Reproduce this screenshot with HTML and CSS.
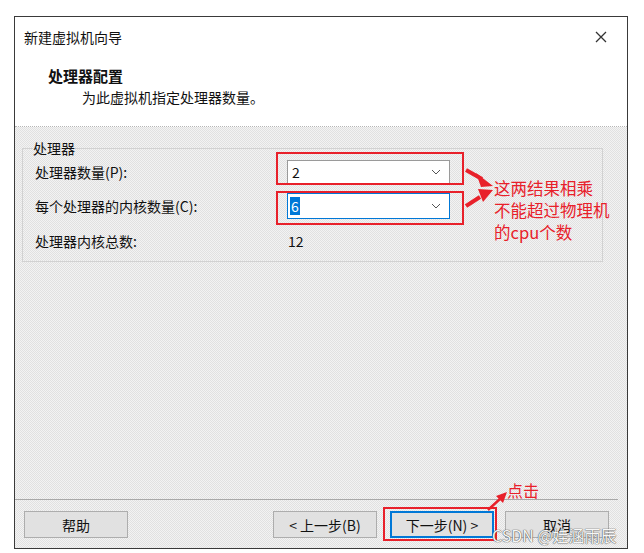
FILE: index.html
```html
<!DOCTYPE html>
<html>

	<head>
		<meta charset="UTF-8">
		<title>新建虚拟机向导</title>
		<link rel="stylesheet" href="styles.css">
	</head>

	<body>
		<div class="window">
			<!-- 顶部白色区域 -->
			<div class="header">
				<div class="titleBar">
					<span class="title">新建虚拟机向导</span>
					<svg class="close" width="12" height="12" viewBox="0 0 12 12">
						<path d="M1 1L11 11M11 1L1 11" stroke="#333" stroke-width="1.3" fill="none" />
					</svg>
				</div>
				<h3>处理器配置</h3>
				<p class="sub">为此虚拟机指定处理器数量。</p>
			</div>

			<!-- 灰色内容区域 -->
			<div class="body">
				<fieldset class="group">
					<legend>处理器</legend>
					<div class="rows">
						<label>处理器数量(P):</label>
						<div class="combo">
							<span class="val">2</span>
							<svg width="10" height="6" viewBox="0 0 10 6"><path d="M1 1L5 5L9 1" stroke="#555" fill="none" /></svg>
						</div>
						<label>每个处理器的内核数量(C):</label>
						<div class="combo focus">
							<span class="val sel">6</span>
							<svg width="10" height="6" viewBox="0 0 10 6"><path d="M1 1L5 5L9 1" stroke="#555" fill="none" /></svg>
						</div>
						<label>处理器内核总数:</label>
						<span class="total">12</span>
					</div>
				</fieldset>

				<div class="footer">
					<button class="help">帮助</button>
					<button class="prev">&lt; 上一步(B)</button>
					<button class="next">下一步(N) &gt;</button>
					<button class="cancel">取消</button>
				</div>

				<!-- 标注 -->
				<div class="mark mark1"></div>
				<div class="mark mark2"></div>
				<div class="mark mark3"></div>
				<svg class="arrows" width="40" height="45" viewBox="0 0 40 45">
					<path d="M1 3L17 12" stroke="#e8202a" stroke-width="4" fill="none" />
					<path d="M28 19L11 6L16 20Z" fill="#e8202a" />
					<path d="M1 39L15 30" stroke="#e8202a" stroke-width="4" fill="none" />
					<path d="M28 23L13 22L18 35Z" fill="#e8202a" />
				</svg>
				<svg class="clickArrow" width="24" height="24" viewBox="0 0 24 24">
					<path d="M2 21L15 9" stroke="#e8202a" stroke-width="2.5" fill="none" />
					<path d="M21 3L10 7L17 14Z" fill="#e8202a" />
				</svg>
				<p class="note">这两结果相乘<br>不能超过物理机<br>的cpu个数</p>
				<span class="clickTxt">点击</span>
				<span class="watermark">CSDN @娃涵雨辰</span>
			</div>
		</div>
	</body>

</html>
```

FILE: styles.css
```css
* {
	margin: 0;
	padding: 0;
	box-sizing: border-box;
}

body {
	background: #fff;
	font-family: "Noto Sans CJK SC", "Noto Sans", sans-serif;
	font-size: 14px;
	color: #111;
}

.window {
	width: 614px;
	height: 533px;
	margin: 16px 0 0 14px;
	border: 1px solid #3a3a3a;
	display: flex;
	flex-direction: column;
	background: #fff;
}

.header {
	height: 110px;
	padding: 10px 20px 0 9px;
	border-bottom: 1px dotted #b5b5b5;
}

.titleBar {
	display: flex;
	justify-content: space-between;
	align-items: center;
	height: 20px;
	line-height: 20px;
	font-size: 14px;
}

.header h3 {
	margin: 19px 0 0 24px;
	font-size: 15px;
	line-height: 20px;
	font-weight: 700;
}

.header .sub {
	margin: 1px 0 0 58px;
	line-height: 20px;
	font-size: 14px;
}

.body {
	flex: 1;
	position: relative;
	display: flex;
	flex-direction: column;
	background: repeating-conic-gradient(#f3f3f3 0 25%, #e1e1e1 0 50%) 0 0 / 2px 2px;
}

.group {
	margin: 14px 24px 0 7px;
	border: 1px solid #d2d2d2;
	padding: 0 12px 3px 12px;
}

.group legend {
	margin-left: -2px;
	line-height: 14px;
	font-size: 14px;
}

.rows {
	display: grid;
	grid-template-columns: 252px 163px;
	grid-template-rows: 33px 35px 35px;
	align-items: center;
}

.rows label {
	font-size: 14px;
}

.combo {
	height: 24px;
	background: #fff;
	border: 1px solid #9a9a9a;
	display: flex;
	align-items: center;
	justify-content: space-between;
	padding: 0 8px 0 4px;
}

.combo.focus {
	height: 26px;
	border-color: #0078d7;
	padding-left: 2px;
}

.combo .val {
	line-height: 18px;
}

.combo .sel {
	background: #0078d7;
	color: #fff;
	padding: 0 1px;
}

.total {
	padding-left: 1px;
}

.footer {
	margin-top: auto;
	border-top: 1px solid #a8a8a8;
	margin-right: 9px;
	padding: 11px 0 10px 9px;
	display: flex;
}

.footer button {
	width: 104px;
	height: 27px;
	background: #e1e1e1;
	border: 1px solid #adadad;
	font-family: "Noto Sans CJK SC", "Noto Sans", sans-serif;
	font-size: 14px;
	color: #111;
}

.footer .prev {
	margin-left: 145px;
}

.footer .next {
	margin-left: 13px;
	border: 2px solid #0078d7;
}

.footer .cancel {
	margin-left: 11px;
}

.mark {
	position: absolute;
	border: 2px solid #e8202a;
}

.mark1 {
	left: 261px;
	top: 25px;
	width: 188px;
	height: 33px;
}

.mark2 {
	left: 261px;
	top: 64px;
	width: 188px;
	height: 34px;
}

.mark3 {
	left: 368px;
	top: 380px;
	width: 114px;
	height: 34px;
}

.arrows {
	position: absolute;
	left: 450px;
	top: 40px;
}

.clickArrow {
	position: absolute;
	left: 471px;
	top: 362px;
}

.note {
	position: absolute;
	left: 479px;
	top: 50px;
	color: #e8202a;
	font-size: 16.5px;
	line-height: 22px;
}

.clickTxt {
	position: absolute;
	left: 492px;
	top: 352px;
	color: #e8202a;
	font-size: 16px;
	line-height: 22px;
}

.watermark {
	position: absolute;
	left: 477px;
	top: 397px;
	font-size: 16px;
	line-height: 22px;
	color: #f6f6f6;
	text-shadow: 0 0 1px #444, 0 0 1px #444;
	white-space: nowrap;
}
```
